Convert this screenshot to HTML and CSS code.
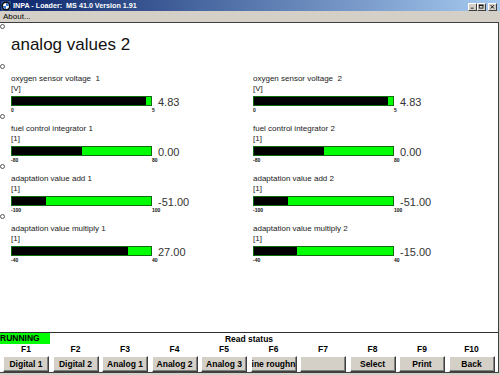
FILE: index.html
```html
<!doctype html>
<html lang="en">

<head>
  <meta charset="UTF-8" />
  <meta name="viewport" content="width=device-width, initial-scale=1.0" />
  <title>INPA - Loader</title>
  <link rel="stylesheet" href="styles.css">
</head>

<body>
  <div class="app">
    <header class="titlebar">
      <svg class="app-icon" viewBox="0 0 10 10">
        <rect x="0" y="0" width="10" height="10" fill="#2a4a8a" />
        <circle cx="5" cy="5" r="4.5" fill="#111" />
        <circle cx="5" cy="5" r="3" fill="#fff" />
        <path d="M5,2 A3,3 0 0 1 8,5 L5,5 Z M5,8 A3,3 0 0 1 2,5 L5,5 Z" fill="#3a7ad8" />
      </svg>
      <span class="title">INPA - Loader:&nbsp; MS 41.0 Version 1.91</span>
      <div class="caption-buttons">
        <div class="caption-btn">
          <svg viewBox="0 0 9 8"><rect x="2" y="5" width="4" height="1" fill="#000" /></svg>
        </div>
        <div class="caption-btn">
          <svg viewBox="0 0 9 8"><rect x="1.5" y="1.5" width="5" height="4" fill="none" stroke="#000" stroke-width="1" /><rect x="1" y="1" width="6" height="1.3" fill="#000" /></svg>
        </div>
        <div class="caption-btn close">
          <svg viewBox="0 0 9 8"><path d="M2,1.5 L6.5,6 M6.5,1.5 L2,6" stroke="#000" stroke-width="1.2" /></svg>
        </div>
      </div>
    </header>

    <nav class="menubar">
      <span class="menu-item">About...</span>
    </nav>

    <main class="window">
      <div class="screen">
        <div class="screen-head">
          <div class="marker"></div>
          <h1 class="screen-title">analog values 2</h1>
        </div>

        <section class="row">
          <div class="marker"></div>
          <div class="pair">
            <div class="gauge">
              <div class="gauge-label">oxygen sensor voltage&nbsp; 1</div>
              <div class="gauge-unit">[V]</div>
              <div class="bar-row">
                <div class="bar"><div class="bar-fill" style="width: 96.6%"></div></div>
                <span class="bar-value">4.83</span>
              </div>
              <div class="scale"><span>0</span><span class="scale-max">5</span></div>
            </div>
            <div class="gauge">
              <div class="gauge-label">oxygen sensor voltage&nbsp; 2</div>
              <div class="gauge-unit">[V]</div>
              <div class="bar-row">
                <div class="bar"><div class="bar-fill" style="width: 96.6%"></div></div>
                <span class="bar-value">4.83</span>
              </div>
              <div class="scale"><span>0</span><span class="scale-max">5</span></div>
            </div>
          </div>
        </section>

        <section class="row">
          <div class="marker"></div>
          <div class="pair">
            <div class="gauge">
              <div class="gauge-label">fuel control integrator 1</div>
              <div class="gauge-unit">[1]</div>
              <div class="bar-row">
                <div class="bar"><div class="bar-fill" style="width: 50%"></div></div>
                <span class="bar-value">0.00</span>
              </div>
              <div class="scale"><span>-80</span><span class="scale-max">80</span></div>
            </div>
            <div class="gauge">
              <div class="gauge-label">fuel control integrator 2</div>
              <div class="gauge-unit">[1]</div>
              <div class="bar-row">
                <div class="bar"><div class="bar-fill" style="width: 50%"></div></div>
                <span class="bar-value">0.00</span>
              </div>
              <div class="scale"><span>-80</span><span class="scale-max">80</span></div>
            </div>
          </div>
        </section>

        <section class="row">
          <div class="marker"></div>
          <div class="pair">
            <div class="gauge">
              <div class="gauge-label">adaptation value add 1</div>
              <div class="gauge-unit">[1]</div>
              <div class="bar-row">
                <div class="bar"><div class="bar-fill" style="width: 24.5%"></div></div>
                <span class="bar-value">-51.00</span>
              </div>
              <div class="scale"><span>-100</span><span class="scale-max">100</span></div>
            </div>
            <div class="gauge">
              <div class="gauge-label">adaptation value add 2</div>
              <div class="gauge-unit">[1]</div>
              <div class="bar-row">
                <div class="bar"><div class="bar-fill" style="width: 24.5%"></div></div>
                <span class="bar-value">-51.00</span>
              </div>
              <div class="scale"><span>-100</span><span class="scale-max">100</span></div>
            </div>
          </div>
        </section>

        <section class="row">
          <div class="marker"></div>
          <div class="pair">
            <div class="gauge">
              <div class="gauge-label">adaptation value multiply 1</div>
              <div class="gauge-unit">[1]</div>
              <div class="bar-row">
                <div class="bar"><div class="bar-fill" style="width: 83.75%"></div></div>
                <span class="bar-value">27.00</span>
              </div>
              <div class="scale"><span>-40</span><span class="scale-max">40</span></div>
            </div>
            <div class="gauge">
              <div class="gauge-label">adaptation value multiply 2</div>
              <div class="gauge-unit">[1]</div>
              <div class="bar-row">
                <div class="bar"><div class="bar-fill" style="width: 31.25%"></div></div>
                <span class="bar-value">-15.00</span>
              </div>
              <div class="scale"><span>-40</span><span class="scale-max">40</span></div>
            </div>
          </div>
        </section>
      </div>

      <div class="status-row">
        <span class="status-running">RUNNING</span>
        <span class="status-text">Read status</span>
      </div>

      <div class="fkeys">
        <span>F1</span><span>F2</span><span>F3</span><span>F4</span><span>F5</span>
        <span>F6</span><span>F7</span><span>F8</span><span>F9</span><span>F10</span>
      </div>

      <div class="fbuttons">
        <button class="fbutton">Digital 1</button>
        <button class="fbutton">Digital 2</button>
        <button class="fbutton">Analog 1</button>
        <button class="fbutton">Analog 2</button>
        <button class="fbutton">Analog 3</button>
        <button class="fbutton">ine roughn</button>
        <button class="fbutton"></button>
        <button class="fbutton">Select</button>
        <button class="fbutton">Print</button>
        <button class="fbutton">Back</button>
      </div>
    </main>
  </div>
</body>

</html>
```

FILE: styles.css
```css
* {
  margin: 0;
  padding: 0;
  box-sizing: border-box;
  font-family: 'Liberation Sans', Arial, sans-serif;
}

body {
  background-color: #d4d0c8;
  width: 500px;
  height: 375px;
  overflow: hidden;
}

.app {
  display: flex;
  flex-direction: column;
  height: 375px;
}

/* window caption */
.titlebar {
  height: 11px;
  display: flex;
  align-items: center;
  padding: 0 3px 0 1px;
  background: linear-gradient(to right, #0a246a, #a6caf0);
}

.app-icon {
  width: 10px;
  height: 10px;
  margin-right: 2px;
}

.title {
  color: #ffffff;
  font-weight: bold;
  font-size: 7.2px;
  white-space: nowrap;
}

.caption-buttons {
  margin-left: auto;
  display: flex;
  margin-top: 2px;
}

.caption-btn {
  width: 9px;
  height: 8px;
  background-color: #d4d0c8;
  border: 1px solid;
  border-color: #ffffff #404040 #404040 #ffffff;
  display: flex;
}

.caption-btn.close {
  margin-left: 2px;
}

.caption-btn svg {
  width: 100%;
  height: 100%;
}

.menubar {
  height: 11px;
  display: flex;
  align-items: center;
  padding-left: 3px;
}

.menu-item {
  font-size: 8px;
  color: #000;
}

/* main area */
.window {
  width: 499px;
  background-color: #ffffff;
  border-top: 1px solid #404040;
  border-right: 1px solid #404040;
  border-bottom: 1px solid #404040;
  display: flex;
  flex-direction: column;
}

.screen {
  height: 310px;
  border-bottom: 1px solid #303030;
}

.screen-head {
  height: 41px;
  padding-top: 1px;
}

.marker {
  width: 5px;
  height: 5px;
  border: 1px solid #555;
  border-radius: 50%;
}

.screen-title {
  font-weight: normal;
  font-size: 17px;
  line-height: 20px;
  color: #111;
  margin: 6px 0 0 11px;
}

.row {
  height: 50px;
}

.pair {
  display: grid;
  grid-template-columns: 242px 1fr;
  padding-left: 11px;
  margin-top: 5px;
}

.gauge-label,
.gauge-unit {
  font-size: 8px;
  line-height: 10px;
  color: #222;
  white-space: nowrap;
}

.bar-row {
  display: flex;
  align-items: flex-start;
  gap: 6px;
  height: 10px;
  margin-top: 2px;
}

.bar {
  width: 141px;
  height: 10px;
  background-color: #00ff00;
  border: 1px solid #106a10;
}

.bar-fill {
  height: 100%;
  background-color: #000;
}

.bar-value {
  font-size: 11px;
  line-height: 12px;
  color: #333;
}

.scale {
  display: flex;
  width: 141px;
  height: 8px;
  font-size: 5px;
  font-weight: bold;
  line-height: 8px;
  color: #111;
}

.scale-max {
  margin-left: auto;
  width: 0;
  white-space: nowrap;
}

/* bottom panel */
.status-row {
  height: 11px;
  position: relative;
  display: flex;
  align-items: center;
  justify-content: center;
}

.status-running {
  position: absolute;
  left: 0;
  top: 0;
  width: 50px;
  height: 11px;
  background-color: #00ff00;
  font-size: 8.5px;
  font-weight: bold;
  line-height: 11px;
  color: #000;
}

.status-text {
  font-size: 8.5px;
  font-weight: bold;
  color: #000;
}

.fkeys,
.fbuttons {
  display: grid;
  grid-template-columns: repeat(10, 46px);
  column-gap: 3.5px;
  padding-left: 3px;
}

.fkeys {
  height: 11px;
}

.fkeys span {
  font-size: 8.5px;
  font-weight: bold;
  line-height: 11px;
  text-align: center;
  color: #000;
}

.fbuttons {
  margin-top: 1px;
  height: 16px;
}

.fbutton {
  height: 16px;
  background-color: #d4d0c8;
  border: 1px solid;
  border-color: #ffffff #404040 #404040 #ffffff;
  box-shadow: inset -1px -1px 0 #808080;
  font-size: 8.5px;
  font-weight: bold;
  color: #000;
  display: flex;
  align-items: center;
  justify-content: center;
  overflow: hidden;
  white-space: nowrap;
}
```
